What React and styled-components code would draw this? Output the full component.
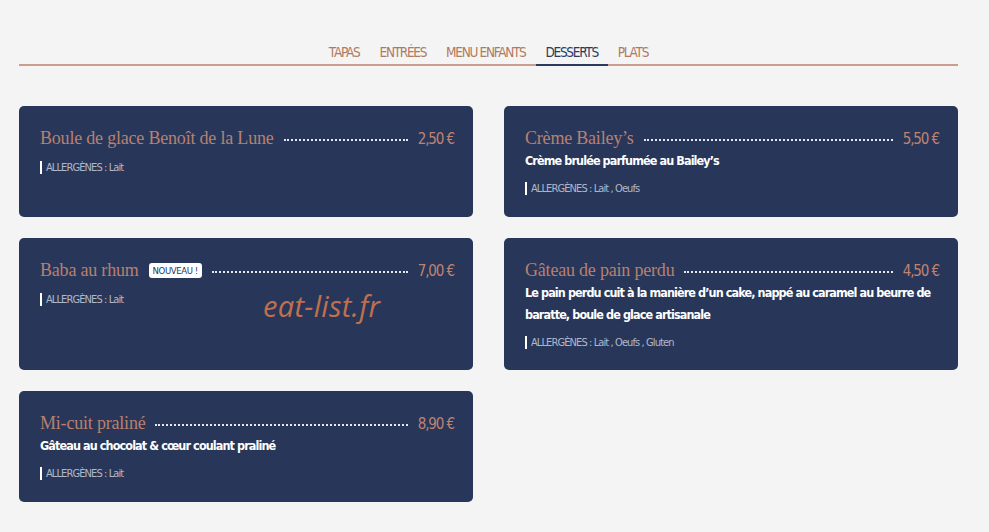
import styled, { createGlobalStyle } from 'styled-components';

const GlobalStyle = createGlobalStyle`
  html, body { margin: 0; padding: 0; background: #f4f4f5; }
  body { font-family: "DejaVu Sans Condensed", "DejaVu Sans", sans-serif; }
`;

const Page = styled.div`
  padding: 40px 31px 0 19px;
  width: 939px;
`;

const Tabs = styled.nav`
  display: flex;
  justify-content: center;
  border-bottom: 2px solid #cb9d8c;
  margin-bottom: 40px;
`;

const Tab = styled.div`
  font-family: "DejaVu Sans Condensed", sans-serif;
  font-size: 13.5px;
  letter-spacing: -1.3px;
  text-transform: uppercase;
  padding: 4px 10px 4px;
  color: ${({ $active }) => ($active ? '#2b3a5e' : '#b07a62')};
  border-bottom: 2px solid ${({ $active }) => ($active ? '#2b3a5e' : 'transparent')};
  margin-bottom: -2px;
`;

const Grid = styled.div`
  display: grid;
  grid-template-columns: 454px 454px;
  column-gap: 31px;
  row-gap: 21px;
`;

const Card = styled.div`
  position: relative;
  background: #283759;
  border-radius: 5px;
  padding: 22px 19px 21px 21px;
  min-height: 68px;
`;

const TitleRow = styled.div`
  display: flex;
  align-items: baseline;
`;

const Title = styled.h3`
  margin: 0;
  font-family: "Liberation Serif", "DejaVu Serif", serif;
  font-weight: 400;
  font-size: 18px;
  letter-spacing: -0.2px;
  color: #b9806f;
  white-space: nowrap;
`;

const Badge = styled.span`
  margin-left: 10px;
  align-self: center;
  background: #fff;
  color: #283759;
  font-size: 9.5px;
  letter-spacing: -0.4px;
  font-weight: 500;
  padding: 1px 4px;
  border-radius: 3px;
  line-height: 13px;
`;

const Dots = styled.span`
  flex: 1;
  margin: 0 10px;
  border-bottom: 2px dotted #e6e8f0;
  transform: translateY(-3px);
`;

const Price = styled.span`
  font-family: "DejaVu Sans Condensed", sans-serif;
  font-size: 15px;
  letter-spacing: -1.1px;
  color: #c08270;
  white-space: nowrap;
`;

const Description = styled.p`
  margin: 1px 0 0;
  font-family: "DejaVu Sans Condensed", sans-serif;
  font-weight: 700;
  font-size: 12.5px;
  letter-spacing: -0.9px;
  line-height: 22px;
  color: #fff;
`;

const Allergens = styled.div`
  margin-top: ${({ $tight }) => ($tight ? '10px' : '12px')};
  display: flex;
  align-items: center;
  gap: 4px;
  font-family: "DejaVu Sans Condensed", sans-serif;
  font-size: 11px;
  letter-spacing: -0.9px;
  color: #b0b7ca;
  &::before {
    content: '';
    width: 2px;
    height: 13px;
    background: #fff;
  }
`;

const Watermark = styled.span`
  position: absolute;
  left: 244px;
  top: 48px;
  font-family: "Open Sans", sans-serif;
  font-style: italic;
  font-size: 29px;
  color: #c0704e;
  letter-spacing: 0.3px;
`;

const tabs = ['Tapas', 'Entrées', 'Menu enfants', 'Desserts', 'Plats'];

const items = [
  { name: 'Boule de glace Benoît de la Lune', price: '2,50 €', allergens: 'Lait' },
  { name: 'Crème Bailey’s', price: '5,50 €', desc: 'Crème brulée parfumée au Bailey’s', allergens: 'Lait , Oeufs' },
  { name: 'Baba au rhum', price: '7,00 €', badge: 'NOUVEAU !', allergens: 'Lait', watermark: true },
  { name: 'Gâteau de pain perdu', price: '4,50 €', desc: 'Le pain perdu cuit à la manière d’un cake, nappé au caramel au beurre de baratte, boule de glace artisanale', allergens: 'Lait , Oeufs , Gluten' },
  { name: 'Mi-cuit praliné', price: '8,90 €', desc: 'Gâteau au chocolat & cœur coulant praliné', allergens: 'Lait' },
];

export default function App() {
  return (
    <Page>
      <GlobalStyle />
      <Tabs>
        {tabs.map((t) => (
          <Tab key={t} $active={t === 'Desserts'}>{t}</Tab>
        ))}
      </Tabs>
      <Grid>
        {items.map((it) => (
          <Card key={it.name}>
            <TitleRow>
              <Title>{it.name}</Title>
              {it.badge && <Badge>{it.badge}</Badge>}
              <Dots />
              <Price>{it.price}</Price>
            </TitleRow>
            {it.desc && <Description>{it.desc}</Description>}
            <Allergens $tight={!!it.desc}>ALLERGÈNES : {it.allergens}</Allergens>
            {it.watermark && <Watermark>eat-list.fr</Watermark>}
          </Card>
        ))}
      </Grid>
    </Page>
  );
}
